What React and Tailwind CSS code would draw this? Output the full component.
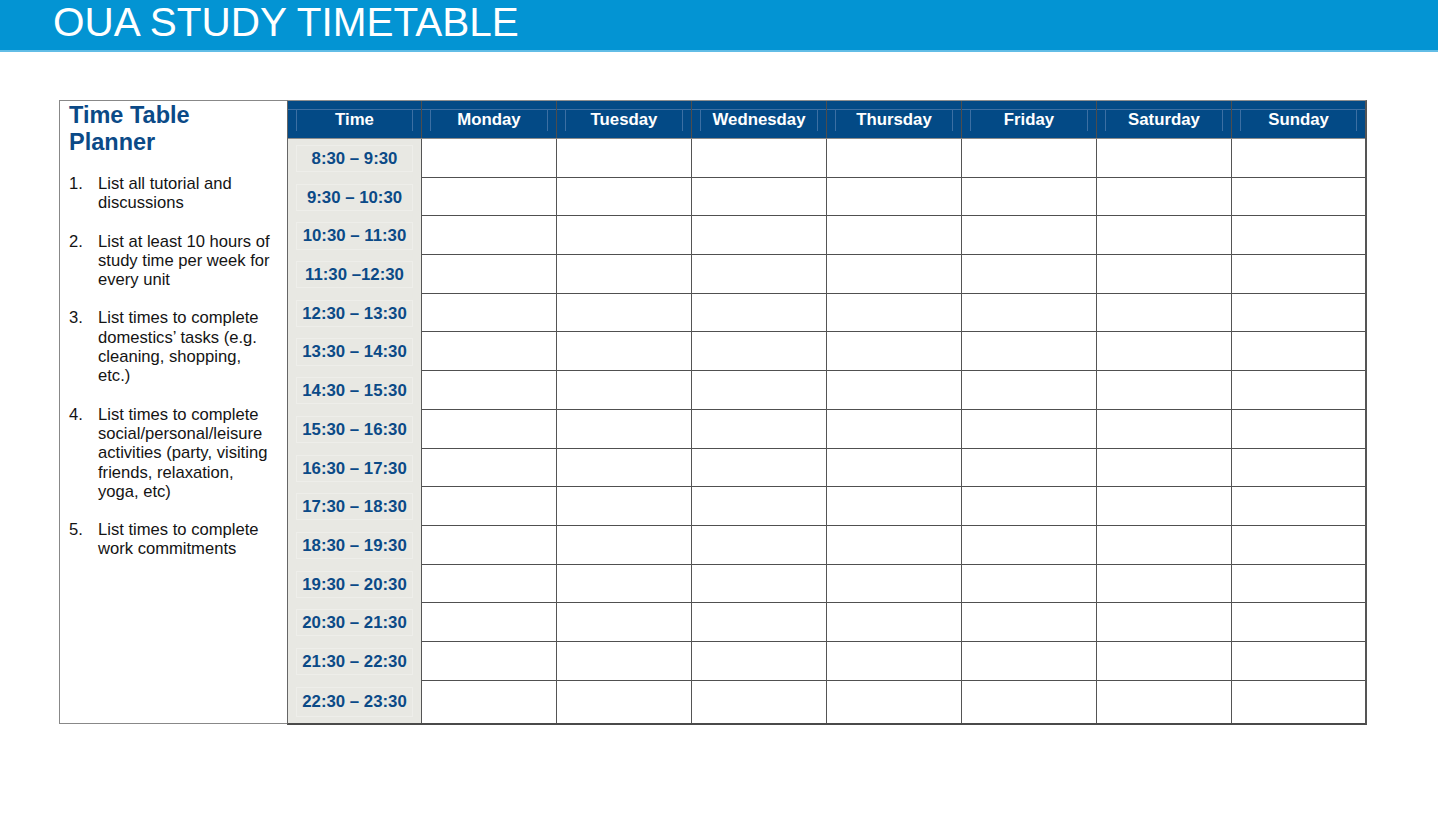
const days = ['Monday', 'Tuesday', 'Wednesday', 'Thursday', 'Friday', 'Saturday', 'Sunday']

const slots = [
  '8:30 – 9:30',
  '9:30 – 10:30',
  '10:30 – 11:30',
  '11:30 –12:30',
  '12:30 – 13:30',
  '13:30 – 14:30',
  '14:30 – 15:30',
  '15:30 – 16:30',
  '16:30 – 17:30',
  '17:30 – 18:30',
  '18:30 – 19:30',
  '19:30 – 20:30',
  '20:30 – 21:30',
  '21:30 – 22:30',
  '22:30 – 23:30',
]

const steps = [
  ['List all tutorial and', 'discussions'],
  ['List at least 10 hours of', 'study time per week for', 'every unit'],
  ['List times to complete', 'domestics’ tasks (e.g.', 'cleaning, shopping,', 'etc.)'],
  ['List times to complete', 'social/personal/leisure', 'activities (party, visiting', 'friends, relaxation,', 'yoga, etc)'],
  ['List times to complete', 'work commitments'],
]

function HeadCell({ label, first }) {
  return (
    <div className={`h-[37px] pt-[8px] ${first ? '' : 'border-l border-[#4d4d4d]'}`}>
      <div className="h-[22px] border-t border-[#3c6fa3] px-[8px]">
        <div className="h-[21px] flex items-center justify-center border-x border-[#3c6fa3] text-white font-bold text-[16.8px] leading-none">
          {label}
        </div>
      </div>
    </div>
  )
}

export default function App() {
  return (
    <div
      className="w-[1438px] h-[818px] bg-white overflow-hidden"
      style={{ fontFamily: '"Liberation Sans", Arial, sans-serif' }}
    >
      <header className="h-[52px] bg-[#0394d3] border-b-2 border-[#62bde6] pl-[53px] flex items-center">
        <h1 className="text-white text-[40.5px] leading-none -mt-[6px]">OUA STUDY TIMETABLE</h1>
      </header>

      <div className="flex ml-[59px] mt-[48px] w-[1308px]">
        {/* Instructions */}
        <aside className="w-[228px] h-[624px] border border-[#888] border-r-0 pl-[9px] pt-[1px]">
          <h2 className="text-[#0b4a87] font-bold text-[23.5px] leading-[27px]">
            Time Table
            <br />
            Planner
          </h2>
          <ol className="mt-[18px] flex flex-col gap-[19px] text-[16.6px] leading-[19.3px] text-[#141414]">
            {steps.map((lines, i) => (
              <li key={i} className="flex">
                <span className="w-[29px] shrink-0">{i + 1}.</span>
                <span>
                  {lines.map((l, j) => (
                    <span key={j} className="block whitespace-nowrap">
                      {l}
                    </span>
                  ))}
                </span>
              </li>
            ))}
          </ol>
        </aside>

        {/* Timetable */}
        <div className="w-[1080px] border-t border-[#8f8f8f] border-r-2 border-r-[#555] border-b-2 border-b-[#4a4a4a] border-l border-l-[#666]">
          <div className="grid grid-cols-[133px_repeat(6,135px)_134px] h-[38px] bg-[#034a86] border-b border-[#8c8c8c] overflow-hidden">
            <HeadCell label="Time" first />
            {days.map((d) => (
              <HeadCell key={d} label={d} />
            ))}
          </div>
          {slots.map((s, i) => (
            <div
              key={s}
              className={`grid grid-cols-[133px_repeat(6,135px)_134px] ${
                i === slots.length - 1 ? 'h-[42px]' : 'h-[38.7px] border-b border-[#505050]'
              }`}
            >
              <div className="bg-[#e8e8e3] py-[6px] px-[8px]">
                <div className="h-full border border-[#eeeeea] flex items-center justify-center text-[#0b4a87] font-bold text-[16.8px]">
                  {s}
                </div>
              </div>
              {days.map((d) => (
                <div key={d} className="border-l border-[#555]" />
              ))}
            </div>
          ))}
        </div>
      </div>
    </div>
  )
}
